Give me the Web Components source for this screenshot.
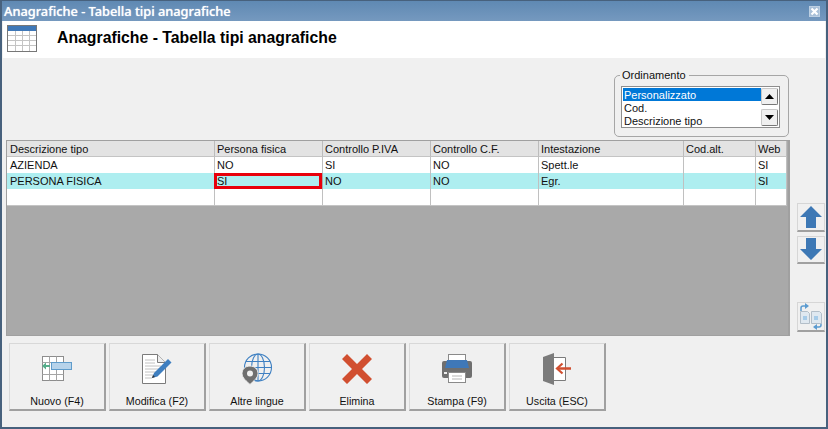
<!DOCTYPE html>
<html lang="it">
<head>
<meta charset="utf-8">
<title>Anagrafiche</title>
<style>
  html, body { margin: 0; padding: 0; overflow: hidden; }
  body { font: 11px "Liberation Sans", sans-serif; color: #111; }
  svg { display: block; }
</style>
</head>
<body>

<template id="tool-icons">
  <svg data-name="nuovo" width="32" height="28" viewBox="0 0 32 28">
    <rect x="1.500" y="1.500" width="21" height="24" fill="#fff" stroke="#8d8d8d"/>
    <path d="M1.500 7.500h21M1.500 19.500h21M8.500 1.500v24M15.500 1.500v24" stroke="#a5a5a5" fill="none"/>
    <rect x="10.500" y="7.500" width="20" height="7" fill="#b7d3ea" stroke="#5f9ccb"/>
    <path d="M1 11l4-3.500V10h4v2H5v2.500z" fill="#55ad8a"/>
  </svg>
  <svg data-name="modifica" width="32" height="32" viewBox="0 0 32 32">
    <path d="M1.500 1.500h15l8 8v21h-23z" fill="#fff" stroke="#7b7b7b"/>
    <path d="M16.500 1.500v8h8" fill="#eee" stroke="#7b7b7b"/>
    <path d="M4 7h10M4 10h10M4 13h16M4 16h14M4 19h11M4 22h9M4 25h7" stroke="#c2c2c2"/>
    <path d="M11 25l2-5 14-14 3.500 3.500-14 14z" fill="#3f7fc0"/>
    <path d="M11 25l1-3 2 2z" fill="#333"/>
  </svg>
  <svg data-name="lingue" width="32" height="32" viewBox="0 0 32 32">
    <g fill="none" stroke="#3f80c2" stroke-width="1.100">
      <circle cx="17" cy="14.500" r="13.500"/>
      <ellipse cx="17" cy="14.500" rx="6.500" ry="13.500"/>
      <path d="M17 1v27M5 8.500h24M3.500 14.500h27M5 20.500h24"/>
    </g>
    <path d="M9 13c-5 0-8 3.600-8 7.500 0 4.500 4.500 7.500 8 11 3.500-3.500 8-6.500 8-11C17 16.600 14 13 9 13z" fill="#6f6f6f" stroke="#f0f0f0"/>
    <circle cx="9" cy="20.500" r="3" fill="#f0f0f0"/>
  </svg>
  <svg data-name="elimina" width="32" height="32" viewBox="0 0 32 32">
    <path d="M6 1l10 10L26 1l5 5-10 10 10 10-5 5-10-10L6 31l-5-5 10-10L1 6z" fill="#d14f30"/>
  </svg>
  <svg data-name="stampa" width="32" height="30" viewBox="0 0 32 30">
    <rect x="7.500" y="0.500" width="17" height="8" fill="#fff" stroke="#8a8a8a"/>
    <path d="M3 7h26a2 2 0 0 1 2 2v13a2 2 0 0 1-2 2H3a2 2 0 0 1-2-2V9a2 2 0 0 1 2-2z" fill="#6f6f6f"/>
    <path d="M6 6h20l2 8H4z" fill="#3f78b8"/>
    <rect x="3" y="18" width="3" height="2" fill="#eee"/>
    <rect x="7.500" y="18.500" width="17" height="10" fill="#fff" stroke="#8a8a8a"/>
    <path d="M11 22h10M11 25h10" stroke="#b5b5b5"/>
  </svg>
  <svg data-name="uscita" width="28" height="32" viewBox="0 0 28 32">
    <path d="M11 4.500h11.500v23H11" fill="#fff" stroke="#7b7b7b"/>
    <path d="M0 4l11-4v32L0 28z" fill="#7b7b7b"/>
    <path d="M28 15.500H15" stroke="#d14f30" stroke-width="2.500"/>
    <path d="M19.500 10.500l-5.500 5 5.500 5" fill="none" stroke="#d14f30" stroke-width="2.200"/>
  </svg>
</template>

<app-window>
  <title-bar slot="title">Anagrafiche - Tabella tipi anagrafiche</title-bar>
  <page-header slot="header">Anagrafiche - Tabella tipi anagrafiche</page-header>
  <sort-group slot="top">
    <list-row selected>Personalizzato</list-row>
    <list-row>Cod.</list-row>
    <list-row>Descrizione tipo</list-row>
  </sort-group>
  <data-grid slot="grid"></data-grid>
  <side-buttons slot="side"></side-buttons>
  <tool-button slot="tools" icon="nuovo">Nuovo (F4)</tool-button>
  <tool-button slot="tools" icon="modifica">Modifica (F2)</tool-button>
  <tool-button slot="tools" icon="lingue">Altre lingue</tool-button>
  <tool-button slot="tools" icon="elimina">Elimina</tool-button>
  <tool-button slot="tools" icon="stampa">Stampa (F9)</tool-button>
  <tool-button slot="tools" icon="uscita">Uscita (ESC)</tool-button>
</app-window>

<script>
class AppWindow extends HTMLElement {
  constructor() {
    super();
    this.attachShadow({ mode: 'open' });
    this.shadowRoot.innerHTML = `
      <style>
        :host {
          display: flex;
          flex-direction: column;
          box-sizing: border-box;
          width: 828px;
          height: 429px;
          background: #f0f0f0;
          border: solid #47617d;
          border-width: 1px 2px 2px 2px;
        }
        .main {
          flex: 1;
          display: flex;
          flex-direction: column;
          padding: 17px 1px 0 4px;
        }
        .top {
          display: flex;
          justify-content: flex-end;
          padding-right: 36px;
          height: 65px;
        }
        .middle {
          display: flex;
          gap: 7px;
          height: 196px;
        }
        .tools {
          display: flex;
          gap: 3px;
          padding: 7px 0 0 3px;
        }
      </style>
      <slot name="title"></slot>
      <slot name="header"></slot>
      <div class="main">
        <div class="top"><slot name="top"></slot></div>
        <div class="middle"><slot name="grid"></slot><slot name="side"></slot></div>
        <div class="tools"><slot name="tools"></slot></div>
      </div>
    `;
  }
}

class TitleBar extends HTMLElement {
  constructor() {
    super();
    this.attachShadow({ mode: 'open' });
    this.shadowRoot.innerHTML = `
      <style>
        :host {
          display: flex;
          align-items: center;
          justify-content: space-between;
          height: 20px;
          padding: 0 6px 0 2px;
          background: linear-gradient(#5f89b3, #7599bf);
          color: #fff;
          font: 500 12.800px "Noto Sans", sans-serif;
          text-shadow: 0 0 1px #dfe9f3;
        }
        .close {
          width: 9px;
          height: 9px;
          background: #a9c0d8;
          border: 1px solid #bccfe2;
        }
        svg { display: block; }
      </style>
      <span><slot></slot></span>
      <div class="close">
        <svg width="9" height="9" viewBox="0 0 9 9"><path d="M1.500 1.500l6 6M7.500 1.500l-6 6" stroke="#fff" stroke-width="2.200"/></svg>
      </div>
    `;
  }
}

class PageHeader extends HTMLElement {
  constructor() {
    super();
    this.attachShadow({ mode: 'open' });
    this.shadowRoot.innerHTML = `
      <style>
        :host {
          display: flex;
          align-items: center;
          gap: 20px;
          height: 37px;
          margin: 0 1px;
          padding: 0 0 3px 4px;
          box-sizing: border-box;
          background: #fff;
          color: #000;
          font: bold 15.800px "Liberation Sans", sans-serif;
        }
        svg { display: block; }
      </style>
      <svg width="30" height="27" viewBox="0 0 30 27">
        <rect x="0.500" y="0.500" width="29" height="26" fill="#fff" stroke="#777"/>
        <rect x="1" y="1" width="28" height="5" fill="#3f78b8"/>
        <path d="M1 10.500h28M1 15.500h28M1 20.500h28M8.500 6v20M15.500 6v20M22.500 6v20" stroke="#c4c4c4"/>
      </svg>
      <span><slot></slot></span>
    `;
  }
}

class SortGroup extends HTMLElement {
  constructor() {
    super();
    this.attachShadow({ mode: 'open' });
    this.shadowRoot.innerHTML = `
      <style>
        :host {
          display: block;
          box-sizing: border-box;
          width: 175px;
          height: 62px;
          position: relative;
          border: 1px solid #a6a6a6;
          border-radius: 5px;
          padding: 10px 8px 0 6px;
        }
        .legend {
          position: absolute;
          top: -9px;
          left: 5px;
          padding: 0 3px 0 2px;
          background: #f0f0f0;
          line-height: 16px;
        }
        .box {
          display: flex;
          justify-content: space-between;
          height: 42px;
          box-sizing: border-box;
          border: 1px solid #8e8e8e;
          background: #fff;
          padding: 1px;
        }
        .items { flex: 1; }
        .scroll {
          width: 17px;
          display: flex;
          flex-direction: column;
          justify-content: space-between;
        }
        .btn {
          display: flex;
          align-items: center;
          justify-content: center;
          box-sizing: border-box;
          height: 17px;
          background: #f0f0f0;
          border: 1px solid #c8c8c8;
          border-right: 1px solid #777;
          border-bottom: 1px solid #777;
          border-radius: 2px;
        }
      </style>
      <span class="legend">Ordinamento</span>
      <div class="box">
        <div class="items"><slot></slot></div>
        <div class="scroll">
          <div class="btn"><svg width="9" height="5"><path d="M4.500 0l4.500 5H0z" fill="#000"/></svg></div>
          <div class="btn"><svg width="9" height="5"><path d="M0 0h9L4.500 5z" fill="#000"/></svg></div>
        </div>
      </div>
    `;
  }
}

class ListRow extends HTMLElement {
  constructor() {
    super();
    this.attachShadow({ mode: 'open' });
    this.shadowRoot.innerHTML = `
      <style>
        :host {
          display: block;
          box-sizing: border-box;
          height: 13px;
          padding: 1px 0 0 1px;
          line-height: 12px;
        }
        :host([selected]) { background: #0078d7; color: #fff; }
      </style>
      <slot></slot>
    `;
  }
}

const COLUMNS = [
  ['Descrizione tipo', 208],
  ['Persona fisica', 108],
  ['Controllo P.IVA', 108],
  ['Controllo C.F.', 108],
  ['Intestazione', 145],
  ['Cod.alt.', 72],
  ['Web', 31]
];
const ROWS = [
  ['AZIENDA', 'NO', 'SI', 'NO', 'Spett.le', '', 'SI'],
  ['PERSONA FISICA', 'SI', 'NO', 'NO', 'Egr.', '', 'SI'],
  ['', '', '', '', '', '', '']
];

class DataGrid extends HTMLElement {
  constructor() {
    super();
    this.attachShadow({ mode: 'open' });
    const template = COLUMNS.map(c => c[1] + 'px').join(' ');
    const head = COLUMNS.map(c => `<div class="hd">${c[0]}</div>`).join('');
    const body = ROWS.map((row, r) => row.map((text, c) => {
      const cls = ['cell'];
      if (r === 1) cls.push('sel');
      if (r === 2) cls.push('end');
      if (r === 1 && c === 1) cls.push('cur');
      return `<div class="${cls.join(' ')}">${text}</div>`;
    }).join('')).join('');
    this.shadowRoot.innerHTML = `
      <style>
        :host {
          display: block;
          box-sizing: border-box;
          width: 784px;
          height: 196px;
          background: #a9a9a9;
          border: 1px solid #a0a0a0;
          border-width: 1px 2px 1px 1px;
        }
        .grid {
          display: grid;
          grid-template-columns: ${template};
          grid-template-rows: 16px 16px 16px 17px;
        }
        .hd, .cell {
          box-sizing: border-box;
          padding: 1px 0 0 2px;
          line-height: 14px;
          white-space: nowrap;
          overflow: hidden;
          border-right: 1px solid #c0c0c0;
        }
        .hd:first-child, .cell:nth-child(7n+1) { padding-left: 3px; }
        .hd { background: #e3e3e3; border-color: #bcbcbc; border-bottom: 1px solid #c4c4c4; }
        .cell { background: #fff; }
        .sel { background: #aeeef0; }
        .end { border-bottom: 1px solid #c4c4c4; }
        .cur {
          position: relative;
          outline: 3px solid #e8000b;
          outline-offset: -3px;
          border: 0;
          margin: 0 1px 0 -1px;
          padding-left: 3px;
        }
      </style>
      <div class="grid">${head}${body}</div>
    `;
  }
}

class SideButtons extends HTMLElement {
  constructor() {
    super();
    this.attachShadow({ mode: 'open' });
    this.shadowRoot.innerHTML = `
      <style>
        :host {
          display: flex;
          flex-direction: column;
          width: 28px;
          padding-top: 63px;
          box-sizing: border-box;
        }
        .b {
          box-sizing: border-box;
          width: 28px;
          height: 30px;
          margin-bottom: 4px;
          display: flex;
          align-items: center;
          justify-content: center;
          border: 1px solid #d6d6d6;
          border-bottom: 2px solid #a0a0a0;
        }
        .last { margin-top: 34px; }
      </style>
      <div class="b"><svg width="22" height="22" viewBox="0 0 22 22"><path d="M11 0l11 11h-6v11H6V11H0z" fill="#3d78b5"/></svg></div>
      <div class="b"><svg width="22" height="22" viewBox="0 0 22 22"><path d="M11 22L0 11h6V0h10v11h6z" fill="#3d78b5"/></svg></div>
      <div class="b last">
        <svg width="26" height="27" viewBox="0 0 26 27">
          <path d="M3 8V5a2 2 0 0 1 2-2h3" fill="none" stroke="#5b9bd0" stroke-width="1.500"/>
          <path d="M7 0l4 3-4 3z" fill="#5b9bd0"/>
          <path d="M23 19v3a2 2 0 0 1-2 2h-3" fill="none" stroke="#5b9bd0" stroke-width="1.500"/>
          <path d="M19 27l-4-3 4-3z" fill="#5b9bd0"/>
          <path d="M2.500 8.500h7l2 2v10h-9z" fill="#dfe8f0" stroke="#b3bec8"/>
          <path d="M13.500 8.500h8l2 2v10h-10z" fill="#dfe8f0" stroke="#b3bec8"/>
          <path d="M5 13h4v4H5zM16 13h4v4h-4z" fill="#a6cbe8"/>
        </svg>
      </div>
    `;
  }
}

class ToolButton extends HTMLElement {
  constructor() {
    super();
    this.attachShadow({ mode: 'open' });
    const icons = document.getElementById('tool-icons').content;
    const icon = icons.querySelector(`[data-name="${this.getAttribute('icon')}"]`);
    this.shadowRoot.innerHTML = `
      <style>
        :host {
          display: flex;
          flex-direction: column;
          align-items: center;
          box-sizing: border-box;
          width: 97px;
          height: 68px;
          border: 1px solid #d8d8d8;
          border-right: 2px solid #a0a0a0;
          border-bottom: 2px solid #a0a0a0;
        }
        .icon {
          height: 50px;
          display: flex;
          align-items: center;
          justify-content: center;
        }
        .label { line-height: 14px; font-size: 10.700px; }
      </style>
      <div class="icon"></div>
      <div class="label"><slot></slot></div>
    `;
    this.shadowRoot.querySelector('.icon').appendChild(icon.cloneNode(true));
  }
}

customElements.define('app-window', AppWindow);
customElements.define('title-bar', TitleBar);
customElements.define('page-header', PageHeader);
customElements.define('sort-group', SortGroup);
customElements.define('list-row', ListRow);
customElements.define('data-grid', DataGrid);
customElements.define('side-buttons', SideButtons);
customElements.define('tool-button', ToolButton);
</script>
</body>
</html>
